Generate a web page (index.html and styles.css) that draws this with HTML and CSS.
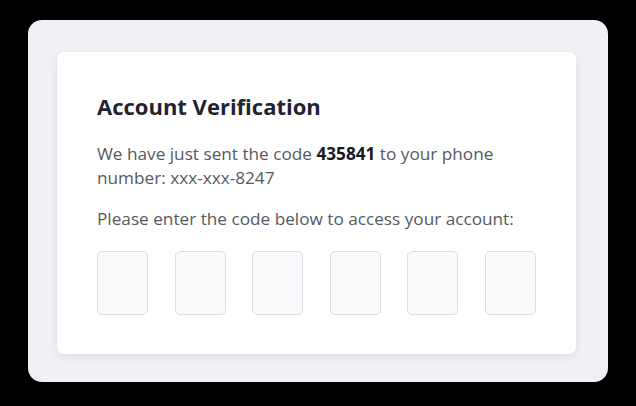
FILE: index.html
```html
<!DOCTYPE html>
<html lang="en">
<head>
<meta charset="utf-8">
<title>Account Verification</title>
<link rel="stylesheet" href="styles.css">
</head>
<body>
<div class="frame">
  <div class="card">
    <h1 class="title">Account Verification</h1>
    <p class="text">We have just sent the code <b class="code">435841</b> to your phone number: xxx-xxx-8247</p>
    <p class="text prompt">Please enter the code below to access your account:</p>
    <div class="otp">
      <input class="digit" type="text" maxlength="1" aria-label="Digit 1">
      <input class="digit" type="text" maxlength="1" aria-label="Digit 2">
      <input class="digit" type="text" maxlength="1" aria-label="Digit 3">
      <input class="digit" type="text" maxlength="1" aria-label="Digit 4">
      <input class="digit" type="text" maxlength="1" aria-label="Digit 5">
      <input class="digit" type="text" maxlength="1" aria-label="Digit 6">
    </div>
  </div>
</div>
</body>
</html>
```

FILE: styles.css
```css
* { box-sizing: border-box; }
html, body {
  margin: 0;
  background: #000;
  width: 636px;
  height: 406px;
  overflow: hidden;
}
body {
  padding: 20px 28px 24px 28px;
  font-family: "Open Sans", "Noto Sans", sans-serif;
}
.frame {
  width: 580px;
  height: 362px;
  background: #f0f1f4;
  border-radius: 14px;
  padding: 32px 32px 28px 29px;
}
.card {
  width: 519px;
  height: 302px;
  background: #fff;
  border-radius: 7px;
  box-shadow: 0 3px 8px rgba(0,0,0,0.08);
  padding: 40px 40px 0 40px;
}
.title {
  margin: 0;
  font-size: 22px;
  line-height: 28px;
  font-weight: 700;
  color: #1f2430;
}
.text {
  margin: 22px 0 0 0;
  font-size: 17.2px;
  line-height: 24px;
  color: #555a61;
}
.prompt { margin-top: 17px; }
.code { color: #16181d; font-weight: 700; }
.otp {
  margin-top: 20px;
  display: flex;
  justify-content: space-between;
}
.digit {
  width: 51px;
  height: 64px;
  border: 1px solid #dcdde0;
  border-radius: 5px;
  background: #f9fafb;
  padding: 0;
  text-align: center;
  font-size: 22px;
  font-family: inherit;
}
```
